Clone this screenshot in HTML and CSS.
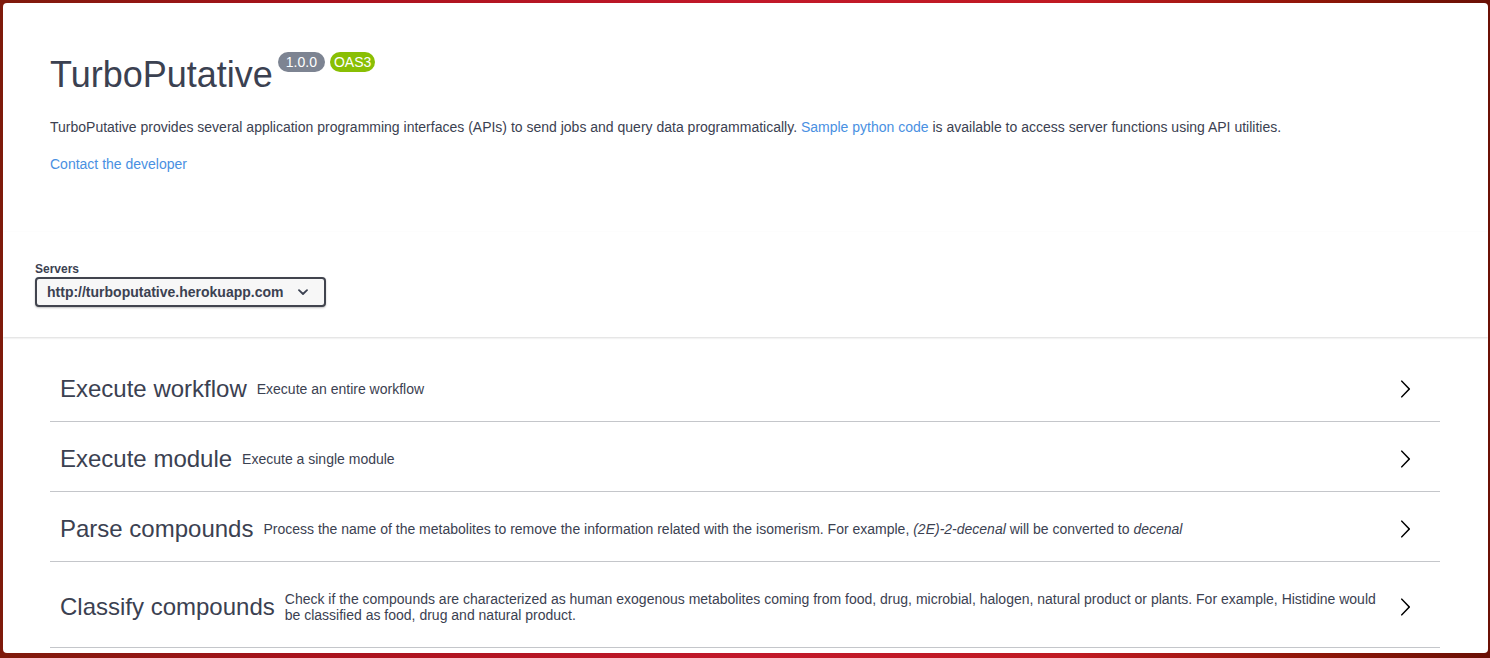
FILE: index.html
```html
<!DOCTYPE html>
<html lang="en">
<head>
<meta charset="utf-8">
<title>TurboPutative API</title>
<link rel="stylesheet" href="styles.css">
</head>
<body>
<div class="frame">
  <div class="info">
    <div class="title-row">
      <h2 class="title">TurboPutative</h2>
      <span class="pill pill-version">1.0.0</span>
      <span class="pill pill-oas">OAS3</span>
    </div>
    <p class="desc">TurboPutative provides several application programming interfaces (APIs) to send jobs and query data programmatically. <a class="link" href="#">Sample python code</a> is available to access server functions using API utilities.</p>
    <p class="contact"><a class="link" href="#">Contact the developer</a></p>
  </div>

  <div class="scheme">
    <div class="servers-label">Servers</div>
    <div class="select">
      <span>http://turboputative.herokuapp.com</span>
      <svg class="chev-down" width="10" height="7" viewBox="0 0 10 7"><path d="M1 1.2 L5 5 L9 1.2" fill="none" stroke="#3b4151" stroke-width="1.8" stroke-linecap="round" stroke-linejoin="round"/></svg>
    </div>
  </div>

  <div class="tags">
    <div class="tag">
      <h3 class="tag-name">Execute workflow</h3>
      <div class="tag-desc">Execute an entire workflow</div>
      <svg class="arrow" width="20" height="20" viewBox="0 0 20 20"><path transform="rotate(-90 10 10)" d="M17.418 6.109c.272-.268.709-.268.979 0s.271.701 0 .969l-7.908 7.83c-.27.268-.707.268-.979 0l-7.908-7.83c-.27-.268-.27-.701 0-.969.271-.268.709-.268.979 0L10 13.25l7.418-7.141z"/></svg>
    </div>
    <div class="tag">
      <h3 class="tag-name">Execute module</h3>
      <div class="tag-desc">Execute a single module</div>
      <svg class="arrow" width="20" height="20" viewBox="0 0 20 20"><path transform="rotate(-90 10 10)" d="M17.418 6.109c.272-.268.709-.268.979 0s.271.701 0 .969l-7.908 7.83c-.27.268-.707.268-.979 0l-7.908-7.83c-.27-.268-.27-.701 0-.969.271-.268.709-.268.979 0L10 13.25l7.418-7.141z"/></svg>
    </div>
    <div class="tag">
      <h3 class="tag-name">Parse compounds</h3>
      <div class="tag-desc">Process the name of the metabolites to remove the information related with the isomerism. For example, <em>(2E)-2-decenal</em> will be converted to <em>decenal</em></div>
      <svg class="arrow" width="20" height="20" viewBox="0 0 20 20"><path transform="rotate(-90 10 10)" d="M17.418 6.109c.272-.268.709-.268.979 0s.271.701 0 .969l-7.908 7.83c-.27.268-.707.268-.979 0l-7.908-7.83c-.27-.268-.27-.701 0-.969.271-.268.709-.268.979 0L10 13.25l7.418-7.141z"/></svg>
    </div>
    <div class="tag">
      <h3 class="tag-name">Classify compounds</h3>
      <div class="tag-desc">Check if the compounds are characterized as human exogenous metabolites coming from food, drug, microbial, halogen, natural product or plants. For example, Histidine would be classified as food, drug and natural product.</div>
      <svg class="arrow" width="20" height="20" viewBox="0 0 20 20"><path transform="rotate(-90 10 10)" d="M17.418 6.109c.272-.268.709-.268.979 0s.271.701 0 .969l-7.908 7.83c-.27.268-.707.268-.979 0l-7.908-7.83c-.27-.268-.27-.701 0-.969.271-.268.709-.268.979 0L10 13.25l7.418-7.141z"/></svg>
    </div>
  </div>
</div>
</body>
</html>
```

FILE: styles.css
```css
html, body {
  margin: 0;
  padding: 0;
}

body {
  width: 1490px;
  height: 658px;
  overflow: hidden;
  background: linear-gradient(to right, #7e1a0b 0%, #a8121c 20%, #c2182a 50%, #c01a22 72%, #8f1608 88%, #6a1005 100%);
  font-family: "Liberation Sans", Arial, sans-serif;
  color: #3b4151;
}

.frame {
  margin: 3px 2px 0 3px;
  height: 650px;
  background: #fff;
  border-radius: 4px;
  overflow: hidden;
}

.info {
  padding: 49px 48px 0 47px;
}

.title-row {
  display: flex;
  align-items: flex-start;
}

.title {
  margin: 5px 0 0 0;
  font-size: 36px;
  line-height: 36px;
  font-weight: 400;
  color: #3b4151;
}

.pill {
  display: inline-block;
  height: 20px;
  line-height: 20px;
  font-size: 14px;
  color: #fff;
  border-radius: 57px;
}

.pill-version {
  margin-left: 5px;
  padding: 0 8px;
  background: #7d8492;
}

.pill-oas {
  margin-left: 5px;
  padding: 0 4px;
  background: #89bf04;
}

.desc {
  margin: 26px 0 0 0;
  font-size: 14px;
  line-height: 16px;
}

.contact {
  margin: 21px 0 0 0;
  font-size: 14px;
  line-height: 16px;
}

.link {
  color: #4990e2;
  text-decoration: none;
}

.scheme {
  margin-top: 60px;
  padding: 30px 0 30px 32px;
  box-shadow: 0 1px 2px 0 rgba(0, 0, 0, 0.15);
}

.servers-label {
  font-size: 12px;
  line-height: 14px;
  font-weight: 700;
  color: #3b4151;
  margin-bottom: 1px;
}

.select {
  box-sizing: border-box;
  width: 291px;
  height: 30px;
  display: flex;
  align-items: center;
  justify-content: space-between;
  padding: 0 16px 0 10px;
  border: 2px solid #41444e;
  border-radius: 4px;
  background: #f7f7f7;
  box-shadow: 0 1px 2px 0 rgba(0, 0, 0, 0.25);
  font-size: 14px;
  font-weight: 700;
  color: #3b4151;
}

.chev-down {
  display: block;
}

.tags {
  padding: 20px 48px 0 47px;
}

.tag {
  display: flex;
  align-items: center;
  padding: 10px 20px 10px 10px;
  margin-bottom: 5px;
  border-bottom: 1px solid rgba(59, 65, 81, 0.3);
}

.tag-name {
  margin: 0;
  font-size: 24px;
  line-height: 28px;
  font-weight: 400;
  color: #3b4151;
  white-space: nowrap;
}

.tag-desc {
  flex: 1;
  padding: 14px 10px;
  font-size: 14px;
  line-height: 16px;
  color: #3b4151;
}

.arrow {
  flex: none;
  margin-right: 5px;
  fill: #000;
}
```
